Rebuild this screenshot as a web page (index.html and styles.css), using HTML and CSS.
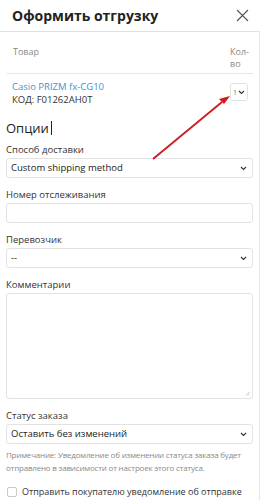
FILE: index.html
```html
<!DOCTYPE html>
<html lang="ru">
<head>
<meta charset="utf-8">
<title>Оформить отгрузку</title>
<link rel="stylesheet" href="styles.css">
</head>
<body>
<div class="dialog">
  <header class="head">
    <h1 class="title">Оформить отгрузку</h1>
    <svg class="close" width="13" height="13" viewBox="0 0 13 13"><path d="M1 1L12 12M12 1L1 12" stroke="#555" stroke-width="1.1" fill="none"/></svg>
  </header>
  <div class="body">
    <div class="thead">
      <span class="th">Товар</span>
      <span class="th th-qty">Кол-во</span>
    </div>
    <div class="row">
      <div class="prod">
        <a class="link">Casio PRIZM fx-CG10</a>
        <span class="code">КОД: F01262AH0T</span>
      </div>
      <div class="qty"><span class="qty-n">1</span><svg width="7" height="5" viewBox="0 0 7 5"><path d="M1 1l2.5 2.5L6 1" stroke="#333" stroke-width="1.1" fill="none"/></svg></div>
    </div>
    <h2 class="options">Опции<span class="caret"></span></h2>
    <div class="fields">
      <div class="field">
        <label class="lbl">Способ доставки</label>
        <div class="select"><span>Custom shipping method</span><svg width="7" height="5" viewBox="0 0 7 5"><path d="M1 1l2.5 2.5L6 1" stroke="#333" stroke-width="1.1" fill="none"/></svg></div>
      </div>
      <div class="field">
        <label class="lbl">Номер отслеживания</label>
        <div class="input"></div>
      </div>
      <div class="field">
        <label class="lbl">Перевозчик</label>
        <div class="select"><span>--</span><svg width="7" height="5" viewBox="0 0 7 5"><path d="M1 1l2.5 2.5L6 1" stroke="#333" stroke-width="1.1" fill="none"/></svg></div>
      </div>
      <div class="field">
        <label class="lbl">Комментарии</label>
        <div class="textarea"><svg class="grip" width="5" height="5" viewBox="0 0 5 5"><path d="M1 4.5L4.5 1M3 4.5L4.5 3" stroke="#aaa" stroke-width="0.7"/></svg></div>
      </div>
      <div class="field">
        <label class="lbl">Статус заказа</label>
        <div class="select"><span>Оставить без изменений</span><svg width="7" height="5" viewBox="0 0 7 5"><path d="M1 1l2.5 2.5L6 1" stroke="#333" stroke-width="1.1" fill="none"/></svg></div>
        <p class="note">Примечание: Уведомление об изменении статуса заказа будет отправлено в зависимости от настроек этого статуса.</p>
      </div>
    </div>
    <div class="check"><span class="box"></span><span class="check-text">Отправить покупателю уведомление об отправке</span></div>
  </div>
  <svg class="arrow" width="260" height="500" viewBox="0 0 260 500">
    <line x1="153" y1="159" x2="222" y2="102" stroke="#d0191e" stroke-width="1.8"/>
    <path d="M230 96L219 99L224 104Z" fill="#d0191e"/>
  </svg>
</div>
</body>
</html>
```
FILE: styles.css
```css
html, body { margin: 0; padding: 0; background: #fff; }
body { font-family: "Open Sans", "Noto Sans", sans-serif; font-stretch: 92%; color: #333; font-size: 9.5px; }
.dialog { position: relative; width: 260px; height: 500px; overflow: hidden; }
.head { height: 32px; display: flex; align-items: center; justify-content: space-between; padding: 0 12px; border-bottom: 1px solid #e3e3e3; box-sizing: border-box; }
.title { margin: 0; font-size: 14px; font-weight: 700; color: #222; font-stretch: 90%; }
.close { margin-right: -1px; }
.body { padding: 0 6px; border-right: 1px solid #e6e6e6; height: 468px; }
.thead { display: flex; justify-content: space-between; align-items: flex-start; padding: 14px 4px 3px 6px; border-bottom: 1px solid #e6e6e6; margin: 0 0 0 1px; }
.th { color: #888; font-size: 9px; line-height: 12px; }
.th-qty { width: 19px; }
.row { display: flex; justify-content: space-between; align-items: flex-start; padding: 6px 5px 0 6px; }
.prod { display: flex; flex-direction: column; }
.link { color: #3e94d1; font-size: 9.5px; line-height: 13px; }
.code { color: #333; font-size: 9.5px; line-height: 13px; }
.qty { width: 18px; height: 18px; border: 1px solid #e2e2e2; border-radius: 3px; display: flex; align-items: center; justify-content: center; gap: 1px; box-sizing: border-box; margin-top: 3px; }
.qty-n { font-size: 7px; color: #777; }
.options { margin: 14px 0 8px; font-size: 13px; font-weight: 400; color: #222; display: flex; align-items: center; height: 16px; line-height: 16px; }
.caret { display: inline-block; width: 1px; height: 14px; background: #222; margin-left: 2px; }
.fields { display: flex; flex-direction: column; gap: 11px; }
.field { display: flex; flex-direction: column; gap: 2px; }
.lbl { display: block; font-size: 9.5px; color: #333; height: 12px; line-height: 12px; white-space: nowrap; }
.select, .input { height: 20px; flex: none; border: 1px solid #e3e3e3; border-radius: 3px; box-sizing: border-box; display: flex; align-items: center; justify-content: space-between; padding: 0 5px 0 4px; font-size: 9.5px; color: #222; line-height: 12px; }
.textarea { position: relative; height: 106px; flex: none; border: 1px solid #e3e3e3; border-radius: 3px; box-sizing: border-box; }
.grip { position: absolute; right: 2px; bottom: 2px; }
.note { margin: 2px 0 0; font-size: 8px; letter-spacing: -0.2px; line-height: 13px; color: #8a8a8a; }
.check { display: flex; align-items: center; gap: 5px; margin-top: 12px; padding-left: 1px; font-size: 9px; color: #333; line-height: 12px; }
.check-text { white-space: nowrap; }
.box { width: 10px; height: 10px; flex: none; border: 1px solid #c9c9c9; border-radius: 2px; box-sizing: border-box; }
.arrow { position: absolute; left: 0; top: 0; pointer-events: none; }
```
